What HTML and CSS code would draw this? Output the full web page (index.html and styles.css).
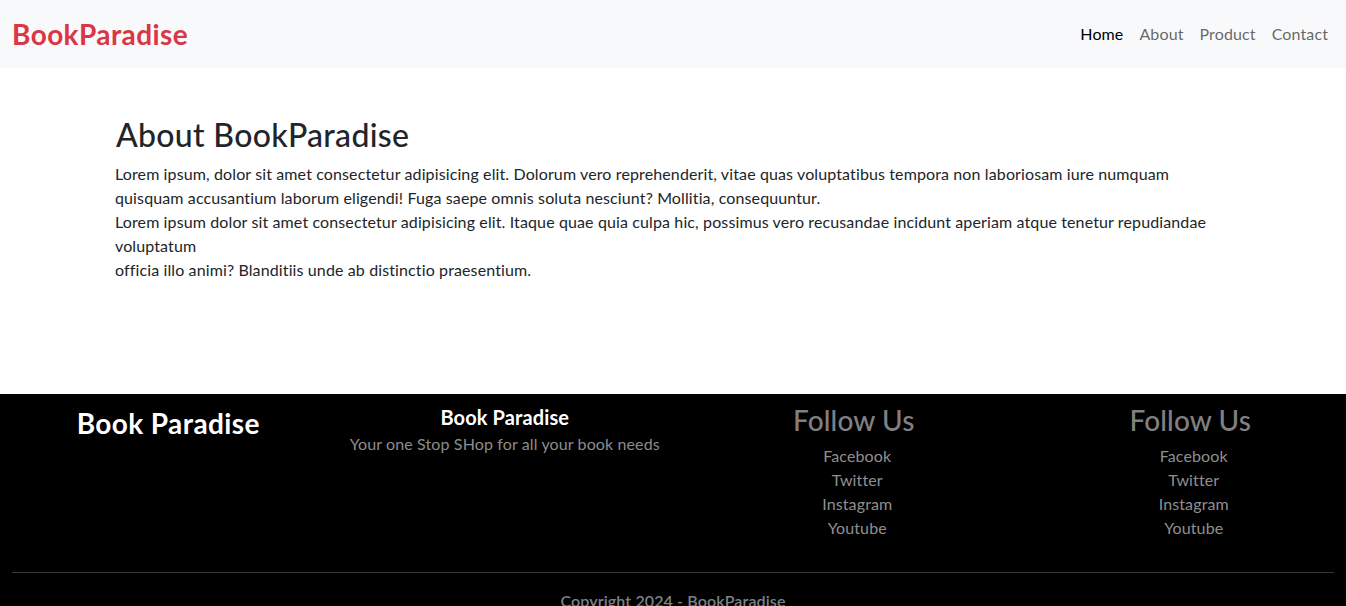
FILE: index.html
```html
<!DOCTYPE html>
<html lang="en">
<head>
<meta charset="utf-8">
<title>About - BookParadise</title>
<link rel="stylesheet" href="styles.css">
</head>
<body>
<nav class="navbar">
  <a class="brand" href="#">BookParadise</a>
  <ul class="nav-links">
    <li><a class="nav-link active" href="#">Home</a></li>
    <li><a class="nav-link" href="#">About</a></li>
    <li><a class="nav-link" href="#">Product</a></li>
    <li><a class="nav-link" href="#">Contact</a></li>
  </ul>
</nav>

<main class="main">
  <div class="container">
    <h2 class="page-title">About BookParadise</h2>
    <p class="about-text">Lorem ipsum, dolor sit amet consectetur adipisicing elit. Dolorum vero reprehenderit, vitae quas voluptatibus tempora non laboriosam iure numquam quisquam accusantium laborum eligendi! Fuga saepe omnis soluta nesciunt? Mollitia, consequuntur.<br>Lorem ipsum dolor sit amet consectetur adipisicing elit. Itaque quae quia culpa hic, possimus vero recusandae incidunt aperiam atque tenetur repudiandae voluptatum<br>officia illo animi? Blanditiis unde ab distinctio praesentium.</p>
  </div>
</main>

<footer class="footer">
  <div class="footer-row">
    <div class="footer-col">
      <h3 class="footer-brand">Book Paradise</h3>
    </div>
    <div class="footer-col">
      <h5 class="footer-title">Book Paradise</h5>
      <p class="footer-tagline">Your one Stop SHop for all your book needs</p>
    </div>
    <div class="footer-col">
      <h3 class="follow-title">Follow Us</h3>
      <ul class="follow-list">
        <li><a href="#">Facebook</a></li>
        <li><a href="#">Twitter</a></li>
        <li><a href="#">Instagram</a></li>
        <li><a href="#">Youtube</a></li>
      </ul>
    </div>
    <div class="footer-col">
      <h3 class="follow-title">Follow Us</h3>
      <ul class="follow-list">
        <li><a href="#">Facebook</a></li>
        <li><a href="#">Twitter</a></li>
        <li><a href="#">Instagram</a></li>
        <li><a href="#">Youtube</a></li>
      </ul>
    </div>
  </div>
  <hr class="footer-rule">
  <p class="copyright">Copyright 2024 - BookParadise</p>
</footer>
</body>
</html>
```

FILE: styles.css
```css
* {
  box-sizing: border-box;
}

html, body {
  margin: 0;
  padding: 0;
}

body {
  font-family: Lato, "Open Sans", "Liberation Sans", sans-serif;
  font-size: 16px;
  line-height: 1.5;
  letter-spacing: 0.12px;
  color: #212529;
  background: #fff;
}

a {
  text-decoration: none;
}

.navbar {
  display: flex;
  align-items: center;
  justify-content: space-between;
  height: 68px;
  padding: 8px 10px 8px 12px;
  background: #f8f9fa;
}

.brand {
  font-size: 28px;
  font-weight: 700;
  color: #dc3545;
  line-height: 42px;
  letter-spacing: 0.4px;
  padding: 5px 0;
}

.nav-links {
  display: flex;
  list-style: none;
  margin: 0;
  padding: 0;
}

.nav-link {
  display: block;
  padding: 8px 8px;
  color: rgba(33, 37, 41, 0.7);
  font-size: 16px;
}

.nav-link.active {
  color: #000;
}

.main {
  padding-top: 48px;
  padding-bottom: 112px;
}

.container {
  max-width: 1140px;
  margin: 0 auto;
  padding: 0 12px;
}

.page-title {
  margin: 0 0 8px;
  padding-left: 1px;
  font-size: 32px;
  font-weight: 500;
  line-height: 1.2;
  letter-spacing: 0.3px;
  color: #212529;
}

.about-text {
  margin: 0;
}

.footer {
  background: #000;
  padding: 8px 12px 0;
  height: 212px;
  overflow: hidden;
}

.footer-row {
  display: grid;
  grid-template-columns: repeat(4, 1fr);
  margin: 0 -12px;
}

.footer-col {
  padding: 0 12px;
  text-align: center;
}

.footer-brand {
  margin: 5px 0 0;
  font-size: 28px;
  font-weight: 700;
  line-height: 1.2;
  letter-spacing: 0.4px;
  color: #fff;
}

.footer-title {
  margin: 3px 0 3px;
  font-size: 20px;
  font-weight: 700;
  line-height: 1.2;
  color: #fff;
}

.footer-tagline {
  margin: 0;
  color: #8c8c8c;
}

.follow-title {
  margin: 2px 0 6px;
  padding-left: 25px;
  font-size: 28px;
  font-weight: 500;
  line-height: 1.2;
  color: #808080;
}

.follow-list {
  list-style: none;
  margin: 0 0 16px;
  padding-left: 32px;
}

.follow-list a {
  color: #8f8f8f;
}

.footer-rule {
  margin: 16px 0;
  border: 0;
  border-top: 1px solid rgba(255, 255, 255, 0.22);
}

.copyright {
  margin: 0;
  text-align: center;
  font-weight: 600;
  color: #7d8287;
}
```
